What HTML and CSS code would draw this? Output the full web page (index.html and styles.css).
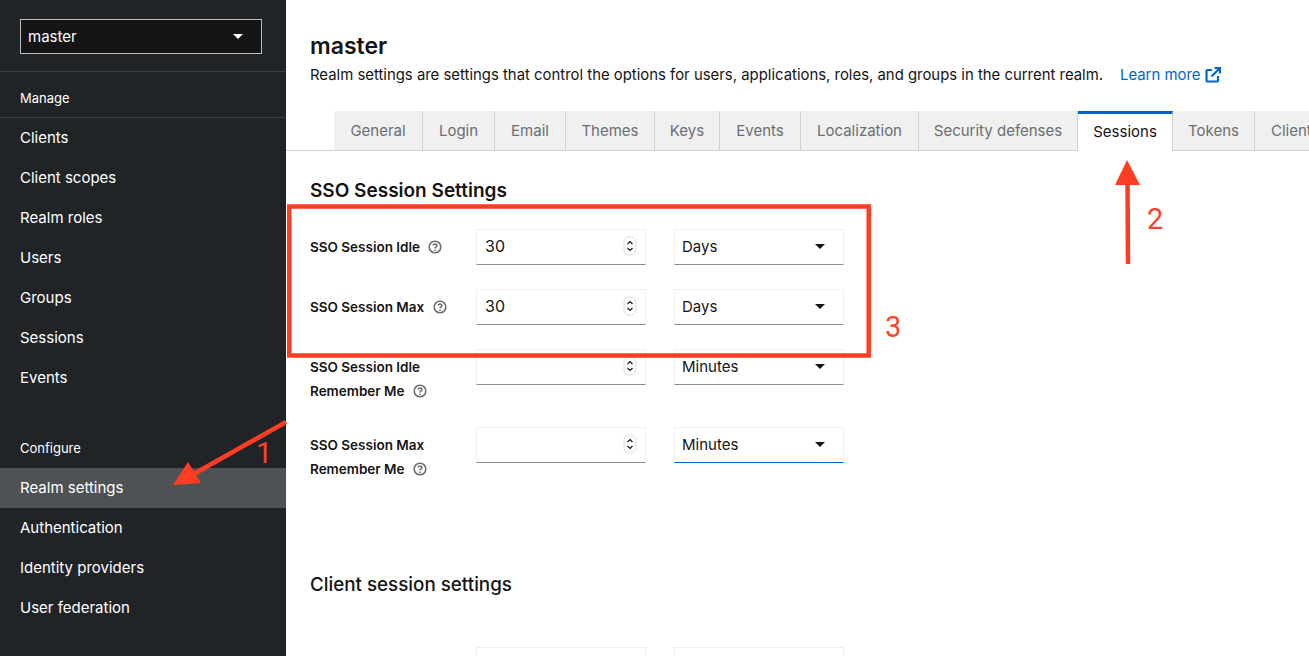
FILE: index.html
```html
<!DOCTYPE html>
<html lang="en">
<head>
    <meta charset="UTF-8">
    <title>Realm settings</title>
    <link rel="stylesheet" href="styles.css">
</head>
<body>
    <div class="page">
        <!-- SIDEBAR -->
        <nav class="sidebar">
            <div class="realm-box">
                <div class="realm-select">
                    <span>master</span>
                    <svg class="caret" viewBox="0 0 10 5"><path d="M0 0h10L5 5z"/></svg>
                </div>
            </div>
            <div class="nav-title nav-title-first">Manage</div>
            <ul class="nav-list">
                <li>Clients</li>
                <li>Client scopes</li>
                <li>Realm roles</li>
                <li>Users</li>
                <li>Groups</li>
                <li>Sessions</li>
                <li>Events</li>
            </ul>
            <div class="nav-title nav-title-second">Configure</div>
            <ul class="nav-list">
                <li class="current">Realm settings</li>
                <li>Authentication</li>
                <li>Identity providers</li>
                <li>User federation</li>
            </ul>
        </nav>

        <!-- MAIN CONTENT -->
        <main class="content">
            <div class="realm-header">
                <h1>master</h1>
                <p>
                    <span class="realm-desc">Realm settings are settings that control the options for users, applications, roles, and groups in the current realm.</span>
                    <a class="learn-more">Learn more
                        <svg viewBox="0 0 16 16"><path d="M7 3H2.600A1.100 1.100 0 0 0 1.500 4.100V13.400A1.100 1.100 0 0 0 2.600 14.500H11.900A1.100 1.100 0 0 0 13 13.400V9M6.500 9.500L14 2M9.500 1H15V6.500" /></svg>
                    </a>
                </p>
            </div>

            <div class="tabs">
                <div class="tab">General</div>
                <div class="tab">Login</div>
                <div class="tab">Email</div>
                <div class="tab">Themes</div>
                <div class="tab">Keys</div>
                <div class="tab">Events</div>
                <div class="tab">Localization</div>
                <div class="tab">Security defenses</div>
                <div class="tab active">Sessions</div>
                <div class="tab">Tokens</div>
                <div class="tab tab-cut">Client policies</div>
            </div>

            <section class="settings">
                <h2>SSO Session Settings</h2>
                <div class="form">
                    <div class="form-label">SSO Session Idle <svg class="help" viewBox="0 0 14 14"><circle cx="7" cy="7" r="5.800"/><path d="M5.200 5.600C5.200 3.400 8.900 3.400 8.900 5.500C8.900 6.900 7 6.800 7 8.500M7 9.700V10.900"/></svg></div>
                    <div class="number-field"><input type="text" value="30"><svg class="stepper" viewBox="0 0 14 20"><rect x="1" y="1" width="12" height="18" rx="5"/><path d="M4.500 8L7 5.500L9.500 8M4.500 12L7 14.500L9.500 12"/></svg></div>
                    <div class="unit-select"><span>Days</span><svg class="caret" viewBox="0 0 10 5"><path d="M0 0h10L5 5z"/></svg></div>

                    <div class="form-label">SSO Session Max <svg class="help" viewBox="0 0 14 14"><circle cx="7" cy="7" r="5.800"/><path d="M5.200 5.600C5.200 3.400 8.900 3.400 8.900 5.500C8.900 6.900 7 6.800 7 8.500M7 9.700V10.900"/></svg></div>
                    <div class="number-field"><input type="text" value="30"><svg class="stepper" viewBox="0 0 14 20"><rect x="1" y="1" width="12" height="18" rx="5"/><path d="M4.500 8L7 5.500L9.500 8M4.500 12L7 14.500L9.500 12"/></svg></div>
                    <div class="unit-select"><span>Days</span><svg class="caret" viewBox="0 0 10 5"><path d="M0 0h10L5 5z"/></svg></div>

                    <div class="form-label">SSO Session Idle<br>Remember Me <svg class="help" viewBox="0 0 14 14"><circle cx="7" cy="7" r="5.800"/><path d="M5.200 5.600C5.200 3.400 8.900 3.400 8.900 5.500C8.900 6.900 7 6.800 7 8.500M7 9.700V10.900"/></svg></div>
                    <div class="number-field"><input type="text" value=""><svg class="stepper" viewBox="0 0 14 20"><rect x="1" y="1" width="12" height="18" rx="5"/><path d="M4.500 8L7 5.500L9.500 8M4.500 12L7 14.500L9.500 12"/></svg></div>
                    <div class="unit-select"><span>Minutes</span><svg class="caret" viewBox="0 0 10 5"><path d="M0 0h10L5 5z"/></svg></div>

                    <div class="form-label">SSO Session Max<br>Remember Me <svg class="help" viewBox="0 0 14 14"><circle cx="7" cy="7" r="5.800"/><path d="M5.200 5.600C5.200 3.400 8.900 3.400 8.900 5.500C8.900 6.900 7 6.800 7 8.500M7 9.700V10.900"/></svg></div>
                    <div class="number-field"><input type="text" value=""><svg class="stepper" viewBox="0 0 14 20"><rect x="1" y="1" width="12" height="18" rx="5"/><path d="M4.500 8L7 5.500L9.500 8M4.500 12L7 14.500L9.500 12"/></svg></div>
                    <div class="unit-select focused"><span>Minutes</span><svg class="caret" viewBox="0 0 10 5"><path d="M0 0h10L5 5z"/></svg></div>
                </div>

                <h2 class="client-heading">Client session settings</h2>
                <div class="form">
                    <div class="form-label"></div>
                    <div class="number-field"></div>
                    <div class="unit-select"></div>
                </div>
            </section>
        </main>

        <!-- ANNOTATIONS drawn over the screenshot -->
        <svg class="marks" viewBox="0 0 1309 656">
            <rect class="mark-box" x="289.200" y="206.500" width="579.500" height="149"/>
            <path class="mark-line" d="M286 422L192 475"/>
            <path class="mark-head" d="M173 485L188 462L201 483z"/>
            <path class="mark-line" d="M1128 264L1127.500 182"/>
            <path class="mark-head" d="M1127 160L1140 185H1115z"/>
        </svg>
        <span class="mark-num num-1">1</span>
        <span class="mark-num num-2">2</span>
        <span class="mark-num num-3">3</span>
    </div>
</body>
</html>
```

FILE: styles.css
```css
* {
    box-sizing: border-box;
}

html, body {
    margin: 0;
    height: 100%;
    overflow: hidden;
}

body {
    background-color: #ffffff;
    color: #151515;
    font-family: 'Inter', 'Noto Sans', sans-serif;
    font-size: 15px;
}

.page {
    position: relative;
    display: flex;
    width: 1309px;
    height: 656px;
    overflow: hidden;
}

/* SIDEBAR */
.sidebar {
    flex: 0 0 286px;
    background-color: #212427;
    color: #ffffff;
}

.realm-box {
    height: 72px;
    padding: 19px 24px 0 20px;
    border-bottom: 1px solid #3c3f42;
}

.realm-select {
    display: flex;
    align-items: center;
    justify-content: space-between;
    height: 35px;
    padding: 0 18px 1px 7px;
    background-color: #151515;
    border: 1px solid #b8bbbe;
}

.caret {
    width: 10px;
    height: 5px;
    fill: #151515;
}

.realm-select .caret {
    fill: #ffffff;
}

.nav-title {
    padding-left: 20px;
    font-size: 13px;
    line-height: 20px;
}

.nav-title-first {
    height: 46px;
    padding-top: 16px;
    border-bottom: 1px solid #3c3f42;
}

.nav-title-second {
    height: 70px;
    padding-top: 40px;
}

.nav-list {
    margin: 0;
    padding: 0;
    list-style: none;
}

.nav-list li {
    height: 40px;
    padding-left: 20px;
    line-height: 39px;
}

.nav-list .current {
    background-color: #4f5255;
}

/* MAIN CONTENT */
.content {
    flex: 1;
    min-width: 0;
}

.realm-header {
    height: 111px;
    padding: 31px 0 0 24px;
}

.realm-header h1 {
    margin: 0;
    font-size: 23px;
    font-weight: 600;
    line-height: 30px;
}

.realm-header p {
    display: flex;
    margin: 2px 0 0;
    font-size: 14.900px;
    line-height: 24px;
    white-space: nowrap;
}

.learn-more {
    display: flex;
    align-items: center;
    margin-left: 17px;
    color: #0066cc;
}

.learn-more svg {
    width: 16px;
    height: 16px;
    margin-left: 5px;
    fill: none;
    stroke: #0066cc;
    stroke-width: 2.200;
}

/* TABS */
.tabs {
    display: grid;
    grid-template-columns: 89px 72px 71px 89px 65px 81px 118px 159px 95px 82px 120px;
    height: 40px;
    padding-left: 48px;
    border-bottom: 1px solid #d2d2d2;
    white-space: nowrap;
}

.tab {
    height: 40px;
    padding-top: 2px;
    background-color: #f0f0f0;
    border-right: 1px solid #d2d2d2;
    border-bottom: 1px solid #d2d2d2;
    color: #6a6e73;
    line-height: 36px;
    text-align: center;
}

.tab.active {
    padding-top: 0;
    background-color: #ffffff;
    border-top: 3px solid #0066cc;
    border-bottom: 0;
    color: #151515;
    line-height: 35px;
}

.tab-cut {
    padding-left: 16px;
    text-align: left;
}

/* FORM */
.settings {
    padding: 28px 0 0 24px;
}

.settings h2 {
    margin: 0;
    font-size: 19px;
    font-weight: 600;
    line-height: 24px;
}

.settings .client-heading {
    margin-top: 92px;
    font-size: 18.800px;
    font-weight: 500;
}

.form {
    display: grid;
    grid-template-columns: 138px 170px 170px;
    column-gap: 28px;
    row-gap: 24px;
    margin-top: 26px;
}

.settings .client-heading + .form {
    margin-top: 50px;
}

.form-label {
    margin-right: -28px;
    padding-top: 6px;
    font-size: 13.500px;
    font-weight: 600;
    line-height: 24px;
}

.help {
    width: 14px;
    height: 14px;
    margin-left: 5px;
    vertical-align: -2px;
    fill: none;
    stroke: #6a6e73;
    stroke-width: 1.600;
}

.number-field,
.unit-select {
    display: flex;
    align-items: center;
    height: 36px;
    padding-bottom: 2px;
    border: 1px solid #f0f0f0;
    border-bottom-color: #8a8d90;
}

.number-field input {
    flex: 1;
    min-width: 0;
    height: 100%;
    padding: 0 0 0 8px;
    border: 0;
    background: transparent;
    color: #151515;
    font: inherit;
    font-size: 16px;
}

.stepper {
    width: 14px;
    height: 20px;
    margin-right: 8px;
    fill: #ffffff;
    stroke: #151515;
    stroke-width: 1.200;
}

.stepper rect {
    stroke: #dcdcdc;
    stroke-width: 1;
}

.unit-select {
    justify-content: space-between;
    padding: 0 18px 2px 7px;
}

.unit-select.focused {
    border-bottom-color: #0066cc;
}

/* ANNOTATIONS */
.marks {
    position: absolute;
    top: 0;
    left: 0;
    width: 1309px;
    height: 656px;
}

.mark-box {
    fill: none;
    stroke: #ff3d22;
    stroke-width: 4.500;
}

.mark-line {
    fill: none;
    stroke: #ff3d22;
    stroke-width: 4.500;
}

.mark-head {
    fill: #ff3d22;
}

.mark-num {
    position: absolute;
    color: #f9432f;
    font-family: 'Roboto', 'Liberation Sans', sans-serif;
    font-size: 29px;
    font-weight: 400;
    line-height: 32px;
}

.num-1 {
    top: 437px;
    left: 256px;
}

.num-2 {
    top: 203px;
    left: 1147px;
}

.num-3 {
    top: 311px;
    left: 885px;
}
```
